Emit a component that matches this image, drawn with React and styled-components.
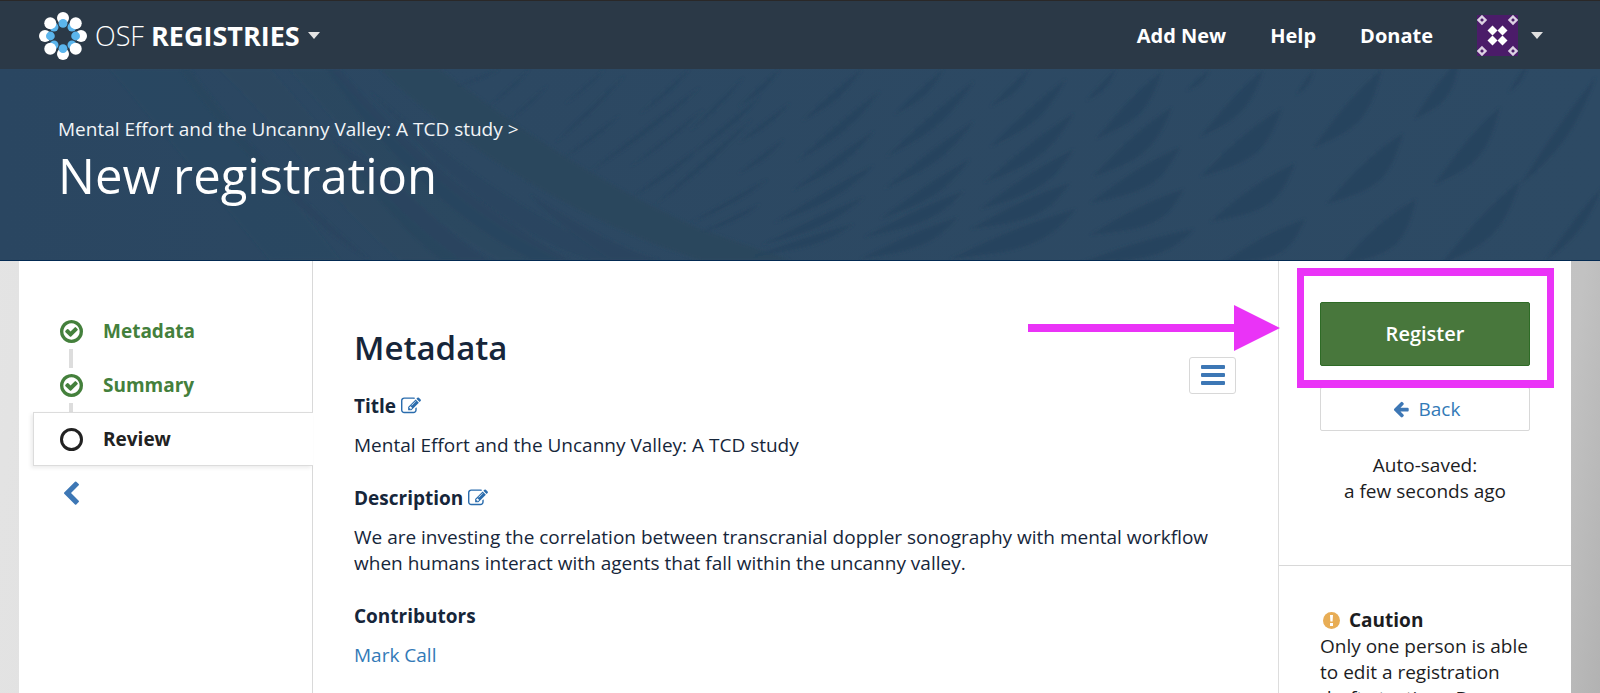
import React from "react";
import styled, { createGlobalStyle } from "styled-components";

const GlobalStyle = createGlobalStyle`
  *, *::before, *::after { box-sizing: border-box; }
  html, body, #root { height: 100%; }
  body {
    margin: 0;
    overflow: hidden;
    font-family: "Open Sans", "Noto Sans", sans-serif;
    font-size: 19px;
    line-height: 26px;
    color: #1c1d1f;
    background: linear-gradient(97deg, #e4e4e4 0%, #d6d6d6 50%, #c2c2c2 96%, #b2b2b2 100%);
  }
  h1, h2, h3, p, ul, ol { margin: 0; padding: 0; }
  ul, ol { list-style: none; }
  a { color: #337ab7; text-decoration: none; }
  button { font: inherit; cursor: pointer; }
`;

const Page = styled.div`
  min-height: 100%;
  display: flex;
  flex-direction: column;
`;

const NavBar = styled.header`
  height: 69px;
  flex: none;
  display: flex;
  align-items: center;
  justify-content: space-between;
  padding: 1px 57px 0 39px;
  border-top: 1px solid #2a2828;
  background: #2b3947;
`;

const Brand = styled.a`
  display: flex;
  align-items: center;
  gap: 8px;
  color: #fff;
  font-size: 27px;
  font-weight: 300;
  line-height: 36px;

  strong { font-weight: 700; }
`;

const Caret = styled.span`
  border: 6px solid transparent;
  border-top: 7px solid ${(p) => p.$color || "#fff"};
  border-bottom: 0;
`;

const NavLinks = styled.nav`
  display: flex;
  align-items: center;
  gap: 44px;
`;

const NavLink = styled.a`
  color: #fff;
  font-size: 20px;
  font-weight: 700;
`;

const UserMenu = styled.button`
  display: flex;
  align-items: center;
  gap: 13px;
  padding: 0;
  border: 0;
  background: none;
`;

const Hero = styled.section`
  position: relative;
  flex: none;
  height: 192px;
  padding: 47px 58px 0;
  overflow: hidden;
  color: #fff;
  background: #2c4964;
  border-bottom: 1px solid #032a52;
`;

const HeroArt = styled.svg`
  position: absolute;
  inset: 0;
  width: 100%;
  height: 100%;
`;

const HeroText = styled.div`
  position: relative;
`;

const Crumb = styled.a`
  display: block;
  color: #f1f4f7;
`;

const PageTitle = styled.h1`
  font-size: 49px;
  font-weight: 400;
  line-height: 66px;
`;

const Columns = styled.div`
  flex: 1;
  display: grid;
  grid-template-columns: 294px minmax(0, 1fr) 293px;
  margin: 0 29px 0 19px;
  background: #fff;
`;

const Sidebar = styled.nav`
  padding: 43px 0 0 14px;
  background: linear-gradient(#d9d9d9, #d9d9d9) right / 1px 100% no-repeat;
`;

const Step = styled.a`
  position: relative;
  display: flex;
  align-items: center;
  gap: 20px;
  height: 54px;
  padding-left: 27px;
  font-weight: 700;
  color: ${(p) => (p.$active ? "#222" : "#44803c")};
  ${(p) =>
    p.$active &&
    `
    z-index: 1;
    background: #fff;
    border: solid #dcdcdc;
    border-width: 1px 0 1px 1px;
    padding-left: 26px;
    box-shadow: -2px 2px 4px rgba(0, 0, 0, 0.08);
  `}
`;

const StepLink = styled.span`
  position: absolute;
  left: 36px;
  top: 45px;
  width: 4px;
  height: 19px;
  background: #ddd;
`;

const Collapse = styled.button`
  display: flex;
  align-items: center;
  height: 56px;
  padding: 0 25px;
  border: 0;
  background: none;
`;

const Content = styled.main`
  padding: 66px 42px 0 41px;
  color: #16263a;
`;

const ContentHead = styled.div`
  display: flex;
  justify-content: space-between;
`;

const SectionTitle = styled.h2`
  font-size: 33px;
  font-weight: 600;
  line-height: 42px;
`;

const MenuButton = styled.button`
  display: flex;
  align-items: center;
  justify-content: center;
  width: 47px;
  height: 37px;
  margin-top: 30px;
  padding: 0 0 2px;
  border: 1px solid #d8d8d8;
  border-radius: 3px;
  background: #fff;
`;

const Field = styled.section`
  margin-bottom: 28px;
`;

const FieldLabel = styled.h3`
  display: flex;
  align-items: center;
  gap: 5px;
  margin-bottom: 14px;
  font-size: 19px;
  font-weight: 700;
  line-height: 24px;

  a { display: flex; }
`;

const Aside = styled.aside`
  border-left: 1px solid #ddd;
`;

const Actions = styled.div`
  height: 305px;
  padding: 41px 41px 0;
  border-bottom: 1px solid #d8d8d8;
`;

const Callout = styled.div`
  position: relative;
  margin-bottom: 21px;

  &::after {
    content: "";
    position: absolute;
    inset: -34px -24px -22px -23px;
    border: 8px solid #ea33f7;
    border-width: 8px 7px;
    pointer-events: none;
  }
`;

const Pointer = styled.svg`
  position: absolute;
  right: calc(100% + 40px);
  top: 3px;
`;

const RegisterButton = styled.button`
  width: 100%;
  height: 64px;
  border: 1px solid #2e6b26;
  border-radius: 2px;
  background: #48773c;
  color: #fff;
  font-size: 20px;
  font-weight: 600;
`;

const BackButton = styled.button`
  display: flex;
  align-items: center;
  justify-content: center;
  gap: 9px;
  width: 100%;
  height: 44px;
  padding: 0 0 0 2px;
  border: 1px solid #d8d8d8;
  border-radius: 2px;
  background: #fff;
  color: #337ab7;
`;

const SaveNote = styled.p`
  margin-top: 21px;
  text-align: center;
`;

const Caution = styled.div`
  padding: 41px 41px 0;
`;

const CautionTitle = styled.h3`
  display: flex;
  align-items: center;
  gap: 9px;
  padding-left: 3px;
  font-size: 19px;
  font-weight: 700;
`;

const FaIcon = ({ size, color, d, box = "0 0 1792 1792" }) => (
  <svg width={size} height={size} viewBox={box} fill={color} aria-hidden="true">
    <path d={d} />
  </svg>
);

const EDIT =
  "M888 1184l116-116-152-152-116 116v56h96v96h56zm440-720q-16-16-33 1l-350 350q-17 17-1 33t33-1l350-350q17-17 1-33zm80 594v190q0 119-84.5 203.5t-203.5 84.5h-832q-119 0-203.5-84.5t-84.5-203.5v-832q0-119 84.5-203.5t203.5-84.5h832q63 0 117 25 15 7 18 23 3 17-9 29l-49 49q-14 14-32 8-23-6-45-6h-832q-66 0-113 47t-47 113v832q0 66 47 113t113 47h832q66 0 113-47t47-113v-126q0-13 9-22l64-64q15-15 35-7t20 29zm-96-738l288 288-672 672h-288v-288zm444 132l-92 92-288-288 92-92q28-28 68-28t68 28l152 152q28 28 28 68t-28 68z";
const CHECK =
  "M1299 813l-422 422q-19 19-45 19t-45-19l-294-294q-19-19-19-45t19-45l102-102q19-19 45-19t45 19l147 147 275-275q19-19 45-19t45 19l102 102q19 19 19 45t-19 45zm141 83q0-148-73-273t-198-198-273-73-273 73-198 198-73 273 73 273 198 198 273 73 273-73 198-198 73-273zm224 0q0 209-103 385.5t-279.5 279.5-385.5 103-385.5-103-279.5-279.5-103-385.5 103-385.5 279.5-279.5 385.5-103 385.5 103 279.5 279.5 103 385.5z";
const ARROW =
  "M1664 896v128q0 53-32.5 90.5t-84.5 37.5h-704l293 294q38 36 38 90t-38 90l-75 76q-37 37-90 37-52 0-91-37l-651-652q-37-37-37-90 0-52 37-91l651-650q38-38 91-38 52 0 90 38l75 74q38 38 38 91t-38 91l-293 293h704q52 0 84.5 37.5t32.5 90.5z";
const CHEVRON =
  "M1427 301l-531 531 531 531q19 19 19 45t-19 45l-166 166q-19 19-45 19t-45-19l-742-742q-19-19-19-45t19-45l742-742q19-19 45-19t45 19l166 166q19 19 19 45t-19 45z";

const ring = (radius, from) =>
  [0, 90, 180, 270].map((step) => {
    const a = ((step + from) * Math.PI) / 180;
    return [Math.cos(a) * radius, Math.sin(a) * radius];
  });

const dots = (points, r, fill) =>
  points.map(([x, y], i) => <circle key={fill + i} cx={x} cy={y} r={r} fill={fill} />);

const Logo = () => (
  <svg width="48" height="48" viewBox="-24 -24 48 48" aria-hidden="true">
    {dots(ring(18, 0), 6, "#fff")}
    {dots(ring(12.6, 45), 4.4, "#5bb5ec")}
    {dots(ring(18, 45), 6, "#fff")}
    {dots(ring(12.6, 0), 4.4, "#5bb5ec")}
  </svg>
);

const Avatar = () => (
  <svg width="41" height="41" viewBox="0 0 41 41" aria-hidden="true">
    <rect width="41" height="41" fill="#4b1c69" />
    {[5, 36].map((x) =>
      [5, 36].map((y) => (
        <path
          key={`${x}-${y}`}
          d={`M${x} ${y - 3.5}l3.5 3.5l-3.5 3.5l-3.5 -3.5z`}
          fill="none"
          stroke="#ddd2e3"
          strokeWidth="2.4"
        />
      ))
    )}
    {[15.5, 25.5].map((x) =>
      [15.5, 25.5].map((y) => (
        <path key={`${x}-${y}`} d={`M${x} ${y - 5}l5 5l-5 5l-5 -5z`} fill="#fff" />
      ))
    )}
  </svg>
);

// Feather blades of the banner: tip x, tip y, tail x, tail y, bulge.
const BLADES = [
  [500, 0, 450, 20, 2], [530, 0, 488, 38, 2], [548, 16, 506, 54, 2], [605, 0, 565, 35, 2],
  [625, 6, 555, 74, 3], [620, 46, 562, 90, 3], [690, 0, 640, 45, 3], [700, 18, 588, 104, 4],
  [704, 40, 630, 98, 3], [700, 78, 632, 128, 4], [744, 8, 690, 62, 3], [760, 28, 690, 86, 4],
  [752, 50, 655, 136, 4], [780, 0, 738, 38, 4], [790, 34, 738, 74, 4], [784, 70, 738, 105, 4],
  [768, 110, 690, 154, 4], [760, 135, 700, 164, 4],
  [862, 0, 802, 52, 6], [880, 22, 797, 92, 7], [874, 62, 792, 122, 7], [874, 96, 774, 154, 8],
  [864, 128, 762, 176, 8], [854, 155, 750, 188, 8],
  [944, 0, 894, 46, 6], [974, 12, 886, 88, 9], [974, 52, 884, 120, 9], [970, 90, 880, 150, 10],
  [964, 122, 864, 168, 11], [958, 148, 860, 190, 12],
  [1030, 0, 990, 38, 6], [1066, 10, 990, 78, 10], [1074, 44, 984, 114, 12], [1074, 80, 980, 140, 13],
  [1070, 114, 970, 160, 15], [1076, 140, 950, 190, 17],
  [1116, 0, 1086, 32, 5], [1162, 2, 1096, 70, 13], [1172, 38, 1092, 108, 15], [1180, 78, 1090, 134, 16],
  [1184, 120, 1090, 166, 17], [1194, 160, 1080, 194, 15],
  [1210, 0, 1186, 22, 4], [1264, 0, 1200, 68, 12], [1282, 39, 1200, 108, 17], [1295, 94, 1210, 153, 18],
  [1305, 150, 1220, 196, 18],
  [1314, 0, 1296, 26, 4], [1382, 0, 1313, 79, 16], [1403, 64, 1326, 135, 18], [1416, 130, 1340, 196, 20],
  [1460, -10, 1414, 50, 12], [1500, 38, 1434, 116, 15], [1520, 112, 1440, 196, 16],
  [1528, -6, 1508, 24, 4], [1596, 8, 1520, 116, 10], [1602, 118, 1545, 192, 8],
];

// Each blade has a near-straight upper edge and a belly that is fullest toward the tail.
const blade = ([x1, y1, x2, y2, w]) => {
  const at = (t) => [x1 + (x2 - x1) * t, y1 + (y2 - y1) * t];
  const [ax, ay] = at(0.4);
  const [bx, by] = at(0.35);
  const [cx, cy] = at(0.65);
  return (
    `M${x1} ${y1}Q${ax - w / 3} ${ay - w / 3} ${x2} ${y2}` +
    `C${cx + w * 1.3} ${cy + w * 0.6} ${bx + w * 0.8} ${by + w * 1.3} ${x1} ${y1}z`
  );
};

const Feathers = () => (
  <HeroArt viewBox="0 0 1600 191" preserveAspectRatio="xMidYMid slice" aria-hidden="true">
    <defs>
      <filter id="soften">
        <feGaussianBlur stdDeviation="1.6" />
      </filter>
      <linearGradient id="shade">
        <stop offset="0" stopColor="#2a4661" />
        <stop offset="0.3" stopColor="#2c4862" />
        <stop offset="1" stopColor="#2d4a64" />
      </linearGradient>
    </defs>
    <rect width="1600" height="191" fill="url(#shade)" />
    <g filter="url(#soften)">
      <g fill="#2e4b60" opacity="0.6">
        <path d="M190 0L340 191H270L110 0z" opacity="0.4" />
        <path d="M270 0C330 70 380 130 460 191H400C330 130 290 70 220 0z" opacity="0.5" />
        <path d="M330 0C400 80 470 150 560 191H500C420 150 360 80 290 0z" opacity="0.6" />
      </g>
      <g fill="#27445e" opacity="0.7">
        <path d="M190 0C230 60 300 130 370 191C330 170 240 90 180 0z" />
        <path d="M340 0C400 70 480 140 570 191H530C450 150 380 80 325 0z" />
        <path d="M360 88C410 120 440 160 490 191H440C400 160 370 120 330 70z" />
        <path d="M370 22C450 90 540 160 640 191H590C500 160 440 100 370 22z" opacity="0.8" />
        <path d="M530 125C570 150 620 180 660 191H610C580 170 550 150 530 125z" />
      </g>
      <path d="M380 0H440C500 45 580 105 700 160L790 191H700C600 160 470 90 380 0z" fill="#29465d" />
      <g fill="#27445e" opacity="0.85">
        {BLADES.map((b) => (
          <path key={b.join()} d={blade(b)} />
        ))}
      </g>
    </g>
  </HeroArt>
);

export default function App() {
  return (
    <Page>
      <GlobalStyle />
      <NavBar>
        <Brand href="#home">
          <Logo />
          <span>
            OSF <strong>REGISTRIES</strong>
          </span>
          <Caret $color="#e4e4e4" />
        </Brand>
        <NavLinks>
          <NavLink href="#add">Add New</NavLink>
          <NavLink href="#help">Help</NavLink>
          <NavLink href="#donate">Donate</NavLink>
          <UserMenu aria-label="User menu">
            <Avatar />
            <Caret $color="#e0e0e0" />
          </UserMenu>
        </NavLinks>
      </NavBar>

      <Hero>
        <Feathers />
        <HeroText>
          <Crumb href="#project">Mental Effort and the Uncanny Valley: A TCD study &gt;</Crumb>
          <PageTitle>New registration</PageTitle>
        </HeroText>
      </Hero>

      <Columns>
        <Sidebar aria-label="Registration steps">
          <Step href="#metadata">
            <FaIcon size={23} color="#44803c" box="128 128 1536 1536" d={CHECK} />
            Metadata
            <StepLink />
          </Step>
          <Step href="#summary">
            <FaIcon size={23} color="#44803c" box="128 128 1536 1536" d={CHECK} />
            Summary
            <StepLink />
          </Step>
          <Step href="#review" $active>
            <svg width="23" height="23" viewBox="0 0 23 23" aria-hidden="true">
              <circle cx="11.5" cy="11.5" r="10" fill="none" stroke="#222" strokeWidth="3" />
            </svg>
            Review
          </Step>
          <Collapse aria-label="Collapse steps">
            <FaIcon size={26} color="#3d77b5" d={CHEVRON} />
          </Collapse>
        </Sidebar>

        <Content>
          <ContentHead>
            <SectionTitle>Metadata</SectionTitle>
            <MenuButton aria-label="Menu">
              <svg width="24" height="20" viewBox="0 0 24 20" fill="#3d77b5" aria-hidden="true">
                <rect width="24" height="4" rx="1" />
                <rect y="8" width="24" height="4" rx="1" />
                <rect y="16" width="24" height="4" rx="1" />
              </svg>
            </MenuButton>
          </ContentHead>
          <Field>
            <FieldLabel>
              Title
              <a href="#edit-title" aria-label="Edit title">
                <FaIcon size={20} color="#2a6cad" d={EDIT} />
              </a>
            </FieldLabel>
            <p>Mental Effort and the Uncanny Valley: A TCD study</p>
          </Field>
          <Field>
            <FieldLabel>
              Description
              <a href="#edit-description" aria-label="Edit description">
                <FaIcon size={20} color="#2a6cad" d={EDIT} />
              </a>
            </FieldLabel>
            <p>
              We are investing the correlation between transcranial doppler sonography with mental
              workflow when humans interact with agents that fall within the uncanny valley.
            </p>
          </Field>
          <Field>
            <FieldLabel>Contributors</FieldLabel>
            <p>
              <a href="#mark-call">Mark Call</a>
            </p>
          </Field>
        </Content>

        <Aside>
          <Actions>
            <Callout>
              <RegisterButton>Register</RegisterButton>
              <Pointer width="252" height="46" viewBox="0 0 252 46" fill="#ea33f7" aria-hidden="true">
                <path d="M0 19H206V0L252 23L206 46V27H0z" />
              </Pointer>
            </Callout>
            <BackButton>
              <FaIcon size={18} color="#3d77b5" d={ARROW} />
              Back
            </BackButton>
            <SaveNote>
              Auto-saved:
              <br />a few seconds ago
            </SaveNote>
          </Actions>
          <Caution>
            <CautionTitle>
              <svg width="17" height="17" viewBox="0 0 17 17" aria-hidden="true">
                <circle cx="8.5" cy="8.5" r="8.5" fill="#e8ad55" />
                <path d="M7 3h3l-0.4 6.5h-2.2zM7 11h3v3h-3z" fill="#fff" />
              </svg>
              Caution
            </CautionTitle>
            <p>Only one person is able to edit a registration draft at a time. Be</p>
          </Caution>
        </Aside>
      </Columns>
    </Page>
  );
}
